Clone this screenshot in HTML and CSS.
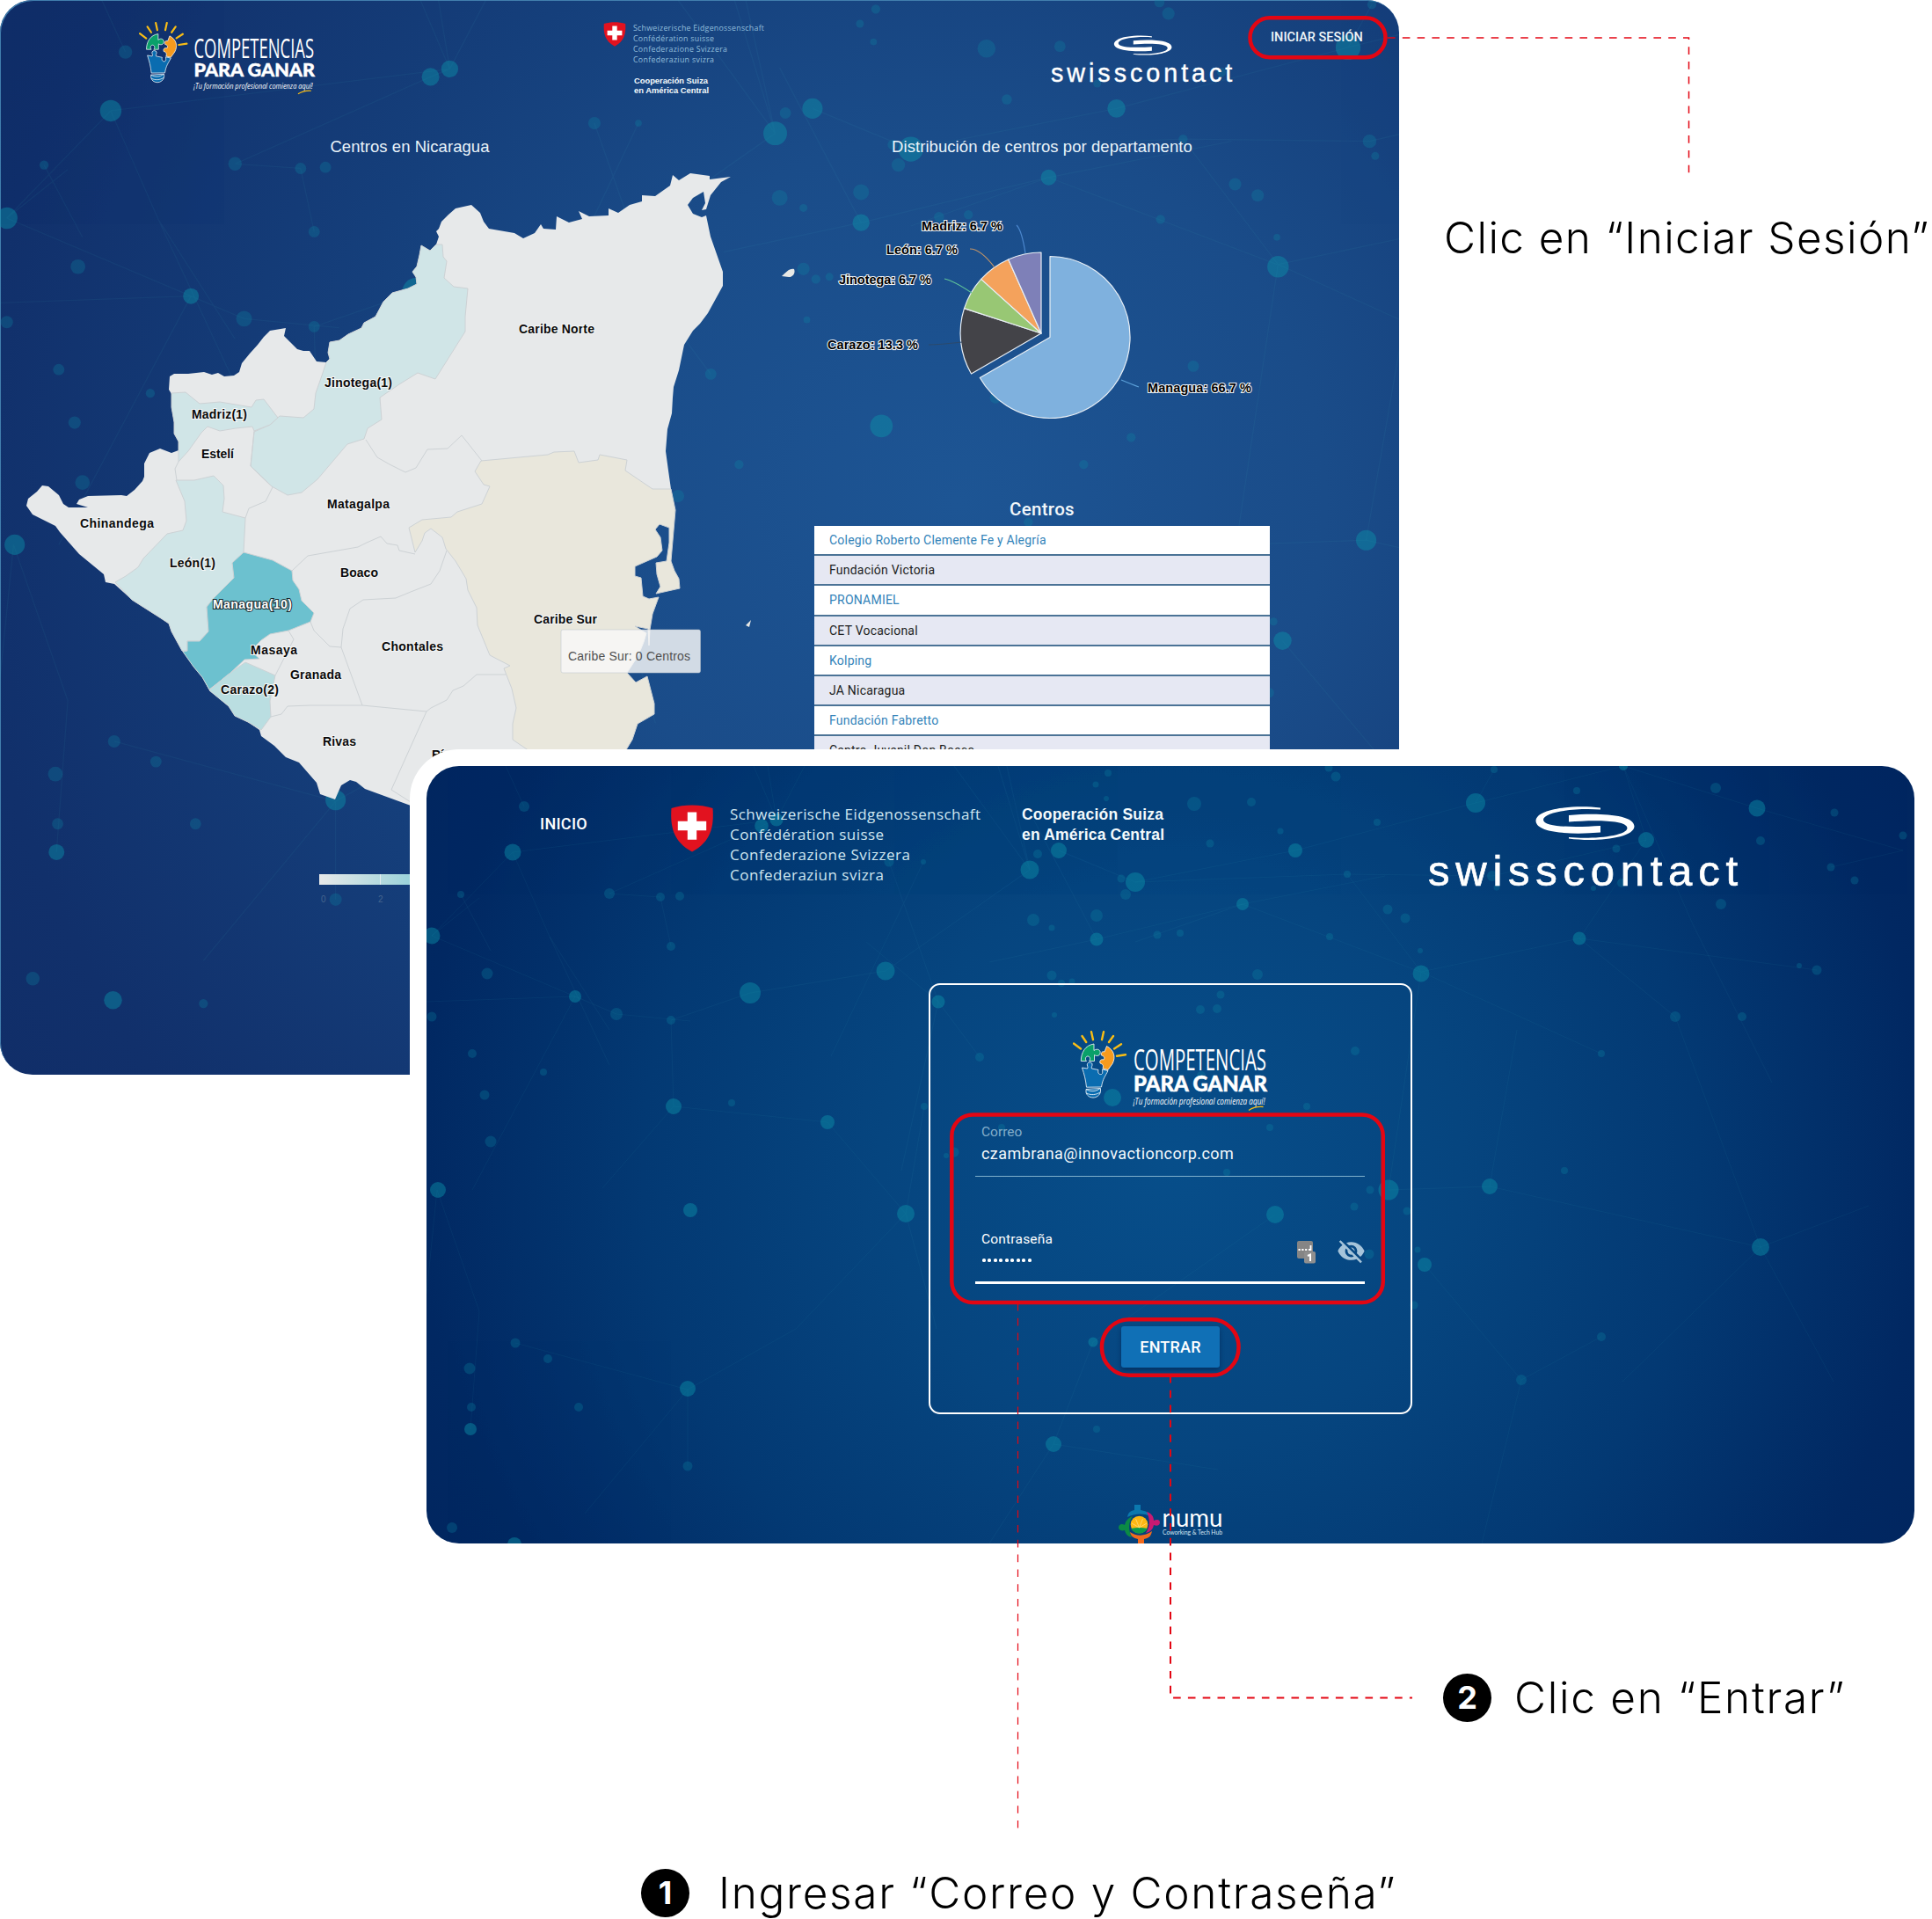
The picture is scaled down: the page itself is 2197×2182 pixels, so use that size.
FILE: index.html
```html
<!DOCTYPE html>
<html lang="es">
<head>
<meta charset="utf-8">
<title>Competencias para Ganar - Inicio de sesión</title>
<link rel="stylesheet" href="styles.css">
</head>
<body>
<svg class="defs" aria-hidden="true">
  <defs>
    <g id="particles">
      <g fill="none" stroke="#3fa8c0" stroke-width="1" opacity=".075">
        <path d="M111 46L90 0M98 98L398 61M98 98L140 194 208 340M98 98L6 193M381 68L398 61 430 0M398 61L372 0M398 61L388 0M381 68L208 145M266 149L208 145M278 205L266 149M39 146L73 210M6 193L169 262 216 282 300 290M169 262L52 482M169 262L0 268M140 194L208 300M6 193L60 150M526 109L582 268M565 109L460 330M368 258L522 233 686 118M368 258L278 289 281 387 200 480M281 387L456 405M456 405L545 509 420 640M545 509L580 640M12 482L0 600M12 482L60 620 50 754M297 709L101 656M297 709L420 640M297 709L297 796M297 709L180 850M582 268L629 331M582 268L500 200M686 118L650 0M686 118L660 0M686 118L600 0"/>
        <path d="M719 96L806 132 988 96 1193 42 1361 0M1193 42L1214 4M1361 0L1513 48 1679 96M1387 84L1361 0M1387 84L1212 125M806 132L1047 123 1212 125M928 157L806 200M928 157L1130 234M762 197L690 60M762 197L928 157 1090 125M762 197L640 223M1131 234L1047 123M1131 234L1311 196 1387 84M1311 196L1420 285 1517 547M1311 196L1581 232M1131 234L1336 327M1094 482L1131 234M1094 482L1209 478 1240 300M1209 478L1517 547M1517 547L1640 500M1517 547L1600 700M1517 547L1360 700M1135 567L1245 698 1336 649M758 655L713 771 640 884M713 771L900 800M965 510L758 655M582 268L540 460M545 509L566 387M1361 0L1440 180 1530 360M1679 96L1597 115M1245 698L1200 884"/>
      </g>
      <g fill="#0c8aa6" opacity=".28">
        <circle cx="111" cy="46" r="6"/><circle cx="39" cy="146" r="4"/><circle cx="208" cy="145" r="6"/><circle cx="266" cy="149" r="5"/><circle cx="288" cy="148" r="5"/><circle cx="278" cy="205" r="5"/><circle cx="526" cy="109" r="5.5"/><circle cx="565" cy="109" r="3"/>
        <circle cx="69" cy="236" r="6.5"/><circle cx="216" cy="282" r="7"/><circle cx="52" cy="327" r="5"/><circle cx="66" cy="374" r="5.5"/><circle cx="73" cy="427" r="6.5"/><circle cx="6" cy="285" r="5.5"/><circle cx="133" cy="348" r="4"/><circle cx="278" cy="289" r="5"/><circle cx="347" cy="383" r="4"/>
        <circle cx="101" cy="656" r="5.5"/><circle cx="138" cy="674" r="5"/><circle cx="49" cy="685" r="6.5"/><circle cx="51" cy="729" r="5"/><circle cx="173" cy="729" r="5"/><circle cx="297" cy="796" r="5.5"/><circle cx="29" cy="866" r="6"/><circle cx="180" cy="888" r="4"/>
        <circle cx="775" cy="8" r="4"/><circle cx="761" cy="21" r="3.5"/><circle cx="773" cy="37" r="3"/><circle cx="873" cy="43" r="8"/><circle cx="938" cy="41" r="5"/><circle cx="1034" cy="12" r="5.5"/><circle cx="1026" cy="2" r="4.5"/><circle cx="1214" cy="4" r="4"/><circle cx="1308" cy="28" r="4"/><circle cx="1466" cy="25" r="6"/><circle cx="1601" cy="53" r="4.5"/>
        <circle cx="1081" cy="64" r="4"/><circle cx="971" cy="74" r="3.5"/><circle cx="891" cy="88" r="4.5"/><circle cx="695" cy="100" r="5"/><circle cx="1353" cy="94" r="4.5"/><circle cx="1517" cy="85" r="5"/><circle cx="1679" cy="79" r="4.5"/><circle cx="1597" cy="115" r="4.5"/><circle cx="1624" cy="130" r="4.5"/><circle cx="1047" cy="123" r="4"/><circle cx="1212" cy="125" r="6"/><circle cx="1217" cy="138" r="3.5"/><circle cx="790" cy="128" r="4.5"/><circle cx="795" cy="146" r="6"/><circle cx="1359" cy="133" r="5"/><circle cx="1327" cy="139" r="3"/><circle cx="1472" cy="157" r="6"/>
        <circle cx="1093" cy="163" r="5.5"/><circle cx="1113" cy="173" r="5.5"/><circle cx="690" cy="175" r="7"/><circle cx="762" cy="170" r="7"/><circle cx="711" cy="184" r="3.5"/><circle cx="831" cy="192" r="4.5"/><circle cx="857" cy="190" r="4"/><circle cx="1027" cy="194" r="4"/><circle cx="1130" cy="210" r="3"/><circle cx="1561" cy="227" r="3"/><circle cx="1581" cy="232" r="5.5"/><circle cx="711" cy="238" r="5.5"/><circle cx="945" cy="237" r="6"/><circle cx="722" cy="247" r="4"/><circle cx="734" cy="245" r="3.5"/>
        <circle cx="714" cy="283" r="3"/><circle cx="880" cy="277" r="5"/><circle cx="899" cy="276" r="5"/><circle cx="903" cy="260" r="4.5"/><circle cx="1056" cy="324" r="5"/><circle cx="629" cy="331" r="5"/><circle cx="881" cy="352" r="5"/><circle cx="566" cy="387" r="4"/><circle cx="1001" cy="387" r="4"/><circle cx="959" cy="411" r="4"/><circle cx="654" cy="411" r="4"/><circle cx="600" cy="439" r="5.5"/><circle cx="591" cy="443" r="3"/><circle cx="910" cy="462" r="4"/><circle cx="1073" cy="482" r="4.5"/><circle cx="1055" cy="501" r="4.5"/><circle cx="1115" cy="506" r="4.5"/><circle cx="1072" cy="555" r="5.5"/><circle cx="1127" cy="550" r="3.5"/><circle cx="1123" cy="613" r="4.5"/>
        <circle cx="1420" cy="285" r="6"/><circle cx="1496" cy="285" r="5"/><circle cx="1336" cy="327" r="4"/><circle cx="1294" cy="460" r="4"/><circle cx="1336" cy="649" r="5"/><circle cx="1245" cy="698" r="6"/><circle cx="762" cy="754" r="4"/>
      </g>
      <g fill="#0c93ab" opacity=".45">
        <circle cx="98" cy="98" r="9.5"/><circle cx="381" cy="68" r="7.8"/><circle cx="398" cy="61" r="7.5"/><circle cx="6" cy="193" r="9.5"/><circle cx="169" cy="262" r="7"/><circle cx="368" cy="258" r="12"/><circle cx="522" cy="233" r="10.5"/><circle cx="281" cy="387" r="9"/><circle cx="300" cy="505" r="8"/><circle cx="13" cy="482" r="9"/><circle cx="456" cy="405" r="8"/><circle cx="545" cy="509" r="10"/><circle cx="297" cy="708" r="9"/><circle cx="50" cy="754" r="7"/><circle cx="713" cy="771" r="9"/><circle cx="100" cy="885" r="8"/>
        <circle cx="1193" cy="42" r="11"/><circle cx="1361" cy="0" r="5"/><circle cx="1513" cy="48" r="9.5"/><circle cx="719" cy="96" r="9"/><circle cx="686" cy="118" r="10.5"/><circle cx="988" cy="96" r="8"/><circle cx="1387" cy="84" r="9"/><circle cx="806" cy="132" r="11"/><circle cx="928" cy="157" r="7"/><circle cx="762" cy="197" r="7.5"/><circle cx="1311" cy="196" r="7.5"/><circle cx="1131" cy="236" r="9.5"/><circle cx="582" cy="268" r="7.5"/><circle cx="780" cy="377" r="10"/><circle cx="1094" cy="482" r="11.5"/><circle cx="965" cy="510" r="10"/><circle cx="1135" cy="567" r="8"/><circle cx="758" cy="655" r="5.5"/><circle cx="1209" cy="478" r="9"/><circle cx="1517" cy="547" r="10"/>
      </g>
    </g>

    <symbol id="brand" viewBox="0 0 222 94">
      <g stroke="#f9bd15" stroke-width="2.4" stroke-linecap="round">
        <path d="M1 14.5l8 6M10.5 6l4.700 7M21 1.200l2 9M35 1.200l-2 9M46 6l-5 7M55 15.200l-8 5.200M60 27.200l-10 1.600"/>
      </g>
      <g stroke="#fff" stroke-width=".8" stroke-linejoin="round">
        <path fill="#0aa06a" d="M9.300 34.500C9.300 25 14 16.500 24 15v7.500c4-3 8-.5 7 3.500-1 3-4.500 3-6.500 1.500v7h-6c2-2 1-5.500-1.500-5.500s-3.500 3.500-1.500 5.500z"/>
        <path fill="#f69a1e" d="M38.500 17.500C47 22 49 30 45 37.500L40 44.500l-6-1.500c1-3 .5-5-3-6-1-3 1-5 4-4 1.500-2 1-4-2.500-5-1-3 1-5 3.500-4z"/>
        <path fill="#0a6cb0" d="M10.500 42l6 1c1.500-2-1-3.500 0-5.500s5-2 5.500.3-1.500 3.500-.5 5.200l7.500 1.500c-1 4 1 5.500 3.500 5 2-1 1-3.500 1-5.500l6.500 1.500c-3 6-6 9-7.500 18.500l-17 .2C14.500 55 13 50 10.500 42z"/>
        <path fill="#0a6cb0" d="M15 66.500l16.500-1v4c-1 4-4.500 6.500-8.500 6.500-4.500 0-7.500-3-8-6z"/>
        <path fill="none" d="M15 66.500c5 3 11 3 16-1M15.500 71c5 2.500 11 2 15.500-1"/>
      </g>
      <text x="69" y="45.300" class="brand-top" textLength="151" lengthAdjust="spacingAndGlyphs">COMPETENCIAS</text>
      <text x="69" y="68.800" class="brand-main" textLength="152" lengthAdjust="spacingAndGlyphs">PARA GANAR</text>
      <text x="68.500" y="84" class="brand-tag" textLength="150" lengthAdjust="spacingAndGlyphs">¡Tu formación profesional comienza aquí!</text>
      <path d="M200 90.500c5-3.500 10-4.500 16.500-4" fill="none" stroke="#f9bd15" stroke-width="1.300"/>
    </symbol>

    <symbol id="shield" viewBox="0 0 50 54">
      <path fill="#e2121f" d="M1.500 4C9 1.500 17 .5 25 .5S41 1.500 48.500 4c1.500 21-2 38-23.500 49.500C3.500 42 0 25 1.500 4z"/>
      <path fill="#fff" d="M19.800 8.500h10.400v10.300h11v10.400h-11v10.500H19.800V29.200h-11V18.800h11z"/>
    </symbol>

    <symbol id="swisscontact" viewBox="0 0 360 100">
      <path fill="#fff" d="M196 3.500C166 0 123 4 122.500 18.500 123 32 162 34.500 196 31.500v-7.500C172 25.500 131 26.500 131 17 131.500 7.500 170 3.500 196 5.500z"/>
      <path fill="#fff" d="M160 38.500c30 4 74 0 74.500-14C234 11 194 9 160 12v7.500c24-2 66-3 66.500 7-.5 9.500-40 13-66.500 10.500z"/>
      <text x="0" y="91.500" class="swc-name" textLength="352">swisscontact</text>
    </symbol>
  </defs>
</svg>

<main class="board">
  <section class="window home">
    <svg class="backdrop" width="1591" height="1222"><use href="#particles" transform="scale(1.285)"/></svg>
    <header class="home-header">
      <svg class="home-brand" width="201" height="85"><use href="#brand"/></svg>
      <svg class="home-swiss" width="190" height="86" viewBox="0 0 190 86">
        <use href="#shield" x="0" y="0" width="26" height="28"/>
        <g class="swiss-names">
          <text x="34" y="9.500" textLength="149">Schweizerische Eidgenossenschaft</text>
          <text x="34" y="21.500" textLength="92">Confédération suisse</text>
          <text x="34" y="33.500" textLength="107">Confederazione Svizzera</text>
          <text x="34" y="45.500" textLength="92">Confederaziun svizra</text>
        </g>
        <g class="swiss-coop small">
          <text x="35" y="70" textLength="84">Cooperación Suiza</text>
          <text x="35" y="81" textLength="85">en América Central</text>
        </g>
      </svg>
      <svg class="home-swc" width="211" height="59"><use href="#swisscontact"/></svg>
      <a class="home-login">INICIAR SESIÓN</a>
    </header>
    <div class="charts">
      <div class="map-col">
        <h2>Centros en Nicaragua</h2>
        <svg width="926" height="1041" viewBox="0 180 926 1041">
          <defs>
            <linearGradient id="scale" x1="0" x2="1"><stop offset="0" stop-color="#e7e9e9"/><stop offset="1" stop-color="#8fd0d8"/></linearGradient>
          </defs>
          <path fill="#e7e9ea" d="M193 428L198 425 214 425 232 423 241 426 248 424 255 428 266 427 272 423 275 413 284 402 293 392 300 383 307 376 325 373 323 382 330 389 338 397 345 399 352 399 360 411 371 412 375 408 373 401 375 389 386 387 396 380 411 373 414 367 427 360 436 343 446 333 464 328 474 323 473 315 469 309 474 303 477 290 479 279 489 285 496 278 499 269 496 263 499 260 502 252 510 244 518 237 536 233 546 242 550 252 556 260 585 265 595 271 608 265 615 255 618 260 632 261 633 246 647 253 662 249 658 240 670 246 692 245 692 237 703 242 716 233 730 229 730 222 745 223 762 211 765 199 772 205 785 197 807 200 807 204 831 201 820 207 808 222 803 238 798 239 802 231 800 218 788 225 782 233 788 243 798 247 803 245 808 269 822 309 822 325 805 356 796 368 788 376 778 392 772 421 766 440 765 452 764 470 759 488 757 513 760 535 763 556 740 566 700 600 690 880 600 930 467 916 415 897 405 889 398 887 388 893 381 909 364 903 360 890 340 867 325 861 312 848 297 837 295 830 282 821 267 814 260 803 238 785 230 770 220 758 213 747 207 740 195 718 192 709 183 703 150 682 130 664 120 662 118 653 90 630 68 605 63 598 37 585 30 575 32 567 42 559 48 552 55 553 67 563 72 573 78 577 100 577 87 573 90 568 100 564 138 563 144 564 153 557 162 547 164 542 164 527 170 515 182 510 195 515 203 512 203 502 198 493 198 480 195 463 195 448 192 443Z"/>
          <g stroke="#cdd2d5" stroke-width="1" stroke-linejoin="round">
            <path fill="#e9e7dc" d="M547 524L623 517 630 514 653 513 658 526 680 523 682 517 713 523 711 535 742 556 763 556 768 580 763 638 767 649 772 658 773 669 746 675 751 667 747 653 746 640 758 638 761 617 761 600 750 596 745 602 751 611 753 626 747 633 722 644 722 655 729 657 731 678 738 681 749 679 742 698 739 716 738 734 737 715 722 712 735 720 732 730 726 745 713 765 723 776 736 769 744 800 744 812 725 823 719 841 710 856 605 856 583 841 583 823 587 805 582 783 573 760 580 757 557 745 543 711 542 691 532 671 530 658 518 638 507 624 503 611 490 601 483 606 480 615 472 628 465 600 480 591 513 588 520 582 548 573 557 553 550 551 540 536Z"/>
            <path fill="#d0e5e7" d="M371 412L366 427 359 447 357 465 345 475 318 473 307 483 289 491 285 530 309 553 327 563 343 560 361 545 395 505 414 499 418 487 434 477 432 452 454 437 475 424 495 431 529 377 529 360 532 328 516 326 505 316 508 297 504 292 503 278 496 278 489 285 479 279 477 290 474 303 469 309 473 315 474 323 464 328 446 333 436 343 427 360 414 367 411 373 396 380 386 387 375 389 373 401 375 408Z"/>
            <path fill="#d0e5e7" d="M195 447L211 446 227 459 250 457 286 463 291 455 300 454 316 475 307 483 289 490 287 485 268 487 250 490 236 485 229 492 214 513 203 525 203 502 198 493 198 480 195 463Z"/>
            <path fill="#d0e5e7" d="M200 546L221 546 243 541 254 552 255 567 253 582 279 589 277 628 265 640 266 657 243 680 235 690 237 718 227 729 213 729 213 740 207 740 195 718 192 709 183 703 150 682 131 662 143 655 157 645 163 635 190 607 208 603 212 592 210 570Z"/>
            <path fill="#6cc1cf" d="M277 628L310 637 332 649 333 660 340 670 343 683 357 697 353 707 328 717 307 721 297 728 285 740 295 749 278 750 260 767 238 784 230 770 220 758 208 741 213 740 213 729 227 729 237 718 235 690 243 680 266 657 264 640Z"/>
            <path fill="#badee1" d="M238 785L258 768 279 753 313 768 307 797 308 815 297 830 282 821 267 814 260 803Z"/>
            <path fill="none" d="M203 525L199 533 201 546M289 490L285 530 310 554 302 570 283 578 279 589M328 717L334 727 313 768M353 707L357 717 375 735 388 736 412 802M308 815L320 812 327 803 353 802 412 802 485 809 490 805 508 796 515 785 527 780 542 767 575 767M485 809L445 898 467 912M388 736L390 715 398 692 413 682 450 680 467 673 490 664 500 649 508 626M332 649L350 632 407 622 417 617 433 610 440 618 452 620 454 626 472 630M416 500L429 520 443 528 461 537 473 532 486 511 509 510 525 495 548 524"/>
          </g>
          <path fill="#e9e9e6" d="M889 314c5-4 8-9 14-8 2 5-2 9-6 9zM848 711l6-6-2 8z"/>
          <g class="map-labels">
            <text x="590" y="379" textLength="86">Caribe Norte</text>
            <text x="369" y="440" textLength="77">Jinotega(1)</text>
            <text x="218" y="476" textLength="63">Madriz(1)</text>
            <text x="229" y="521" textLength="37">Estelí</text>
            <text x="372" y="578" textLength="71">Matagalpa</text>
            <text x="91" y="600" textLength="84">Chinandega</text>
            <text x="193" y="645" textLength="52">León(1)</text>
            <text x="387" y="656" textLength="43">Boaco</text>
            <text x="242" y="692" textLength="90" class="inverse">Managua(10)</text>
            <text x="285" y="744" textLength="53">Masaya</text>
            <text x="434" y="740" textLength="70">Chontales</text>
            <text x="330" y="772" textLength="58">Granada</text>
            <text x="251" y="789" textLength="66">Carazo(2)</text>
            <text x="367" y="848" textLength="38">Rivas</text>
            <text x="607" y="709" textLength="72">Caribe Sur</text>
            <text x="491" y="863" textLength="85">Río San Juan</text>
          </g>
          <g class="map-tip">
            <rect x="638" y="716" width="158.500" height="49" rx="2"/>
            <text x="646" y="751" textLength="139">Caribe Sur: 0 Centros</text>
          </g>
          <rect x="363" y="994" width="120" height="12" fill="url(#scale)"/>
          <path d="M432.500 994v12" stroke="#e4eef0" stroke-width="1"/>
          <g class="scale-labels"><text x="365" y="1026">0</text><text x="430" y="1026">2</text></g>
        </svg>
      </div>
      <div class="data-col">
        <h2>Distribución de centros por departamento</h2>
        <svg width="518" height="382" viewBox="926 180 518 382">
          <g stroke="#e8eef4" stroke-width="1.200" stroke-linejoin="round">
            <path fill="#7fb1de" d="M1194 383.500V291.500A91.500 92 0 1 1 1114.300 429.500Z"/>
            <path fill="#434348" d="M1184 379L1104.500 425A92 92 0 0 1 1096.500 350.600Z"/>
            <path fill="#98c774" d="M1184 379L1096.500 350.600A92 92 0 0 1 1115.700 317.400Z"/>
            <path fill="#f4a25c" d="M1184 379L1115.700 317.400A92 92 0 0 1 1146.700 295Z"/>
            <path fill="#7e80b8" d="M1184 379L1146.700 295A92 92 0 0 1 1184 287Z"/>
          </g>
          <g fill="none" stroke-width="1.200">
            <path stroke="#4a86cc" d="M1156 256q6 6 10 32"/><path stroke="#c29468" d="M1103 283q12 0 28 21"/><path stroke="#5fc39a" d="M1074 317q10 2 31 16"/><path stroke="#2c4a6c" d="M1056 392q12 0 38-3"/><path stroke="#5a9fd8" d="M1275 432q12 5 20 8"/>
          </g>
          <g class="pie-labels">
            <text x="1048" y="262" textLength="92">Madriz: 6.7 %</text>
            <text x="1008" y="289" textLength="81">León: 6.7 %</text>
            <text x="954" y="323" textLength="105">Jinotega: 6.7 %</text>
            <text x="941" y="397" textLength="103">Carazo: 13.3 %</text>
            <text x="1305" y="446" textLength="118">Managua: 66.7 %</text>
          </g>
        </svg>
        <h3>Centros</h3>
        <ul class="centers">
          <li>Colegio Roberto Clemente Fe y Alegría</li>
          <li>Fundación Victoria</li>
          <li>PRONAMIEL</li>
          <li>CET Vocacional</li>
          <li>Kolping</li>
          <li>JA Nicaragua</li>
          <li>Fundación Fabretto</li>
          <li>Centro Juvenil Don Bosco</li>
        </ul>
      </div>
    </div>
  </section>

  <section class="window login">
    <svg class="backdrop" width="1692" height="884"><use href="#particles"/></svg>
    <header class="login-header">
      <a class="login-home">INICIO</a>
      <svg class="login-swiss" width="580" height="100" viewBox="0 0 580 100">
        <use href="#shield" x="0" y="0" width="50" height="54"/>
        <g class="swiss-names large">
          <text x="68" y="16.500" textLength="285">Schweizerische Eidgenossenschaft</text>
          <text x="68" y="39.500" textLength="175">Confédération suisse</text>
          <text x="68" y="62.800" textLength="205">Confederazione Svizzera</text>
          <text x="68" y="86" textLength="175">Confederaziun svizra</text>
        </g>
        <g class="swiss-coop">
          <text x="400" y="17" textLength="161">Cooperación Suiza</text>
          <text x="400" y="39.500" textLength="162">en América Central</text>
        </g>
      </svg>
      <svg class="login-swc" width="360" height="100"><use href="#swisscontact"/></svg>
    </header>
    <form class="card">
      <svg class="card-brand" width="222" height="94"><use href="#brand"/></svg>
      <div class="field">
        <label>Correo</label>
        <span class="value">czambrana@innovactioncorp.com</span>
      </div>
      <div class="field active">
        <div class="field-text">
          <label>Contraseña</label>
          <span class="dots"><i></i><i></i><i></i><i></i><i></i><i></i><i></i><i></i><i></i></span>
        </div>
        <svg class="keyfill" width="22" height="26" viewBox="0 0 22 26">
          <rect x="0" y="0" width="18" height="20" rx="2" fill="#858585"/>
          <path d="M1.500 10h2.200M5.300 10h2.200M9.100 10h2.200M13 10h2M15.500 5v6" stroke="#fff" stroke-width="1.800"/>
          <rect x="8" y="12" width="13" height="13.500" rx="2" fill="#8f8f8f"/>
          <path d="M12 17l3-1.500V23" stroke="#fff" stroke-width="2" fill="none"/>
        </svg>
        <svg class="eye" width="33" height="33" viewBox="0 0 24 24"><path fill="#a6c4da" d="M12 7c2.760 0 5 2.240 5 5 0 .65-.13 1.260-.36 1.830l2.920 2.920c1.510-1.260 2.700-2.890 3.430-4.750-1.730-4.390-6-7.500-11-7.500-1.400 0-2.740.25-3.980.7l2.160 2.160C10.740 7.130 11.350 7 12 7zM2 4.270l2.280 2.280.46.46C3.080 8.300 1.780 10.020 1 12c1.730 4.390 6 7.500 11 7.500 1.550 0 3.030-.3 4.380-.84l.42.42L19.730 22 21 20.730 3.270 3 2 4.270zM7.530 9.800l1.550 1.550c-.05.21-.08.43-.08.65 0 1.660 1.340 3 3 3 .22 0 .44-.03.65-.08l1.550 1.550c-.67.33-1.410.53-2.200.53-2.760 0-5-2.240-5-5 0-.79.2-1.530.53-2.200zm4.310-.78l3.150 3.150.02-.16c0-1.660-1.340-3-3-3l-.17.01z"/></svg>
      </div>
      <button type="button">ENTRAR</button>
    </form>
    <svg class="numu" width="120" height="44" viewBox="0 0 120 44">
      <path fill="#0b78ae" d="M18 0h7v6c6 1 10 3 11 7-8-4-18-3-26 1 1-5 3-7 8-8z"/>
      <path fill="#0b8a45" d="M0 26c0-4 4-5 7-3 1-5 4-8 9-10-5 7-5 16-1 24-5-1-7-4-8-8-3 1-7 0-7-3z"/>
      <path fill="#c81a72" d="M32 8c6 2 8 6 8 10 4-2 7-1 7 2s-3 5-7 3c-1 5-4 8-9 9 5-7 5-16 1-24z"/>
      <path fill="#f06a1d" d="M13 31c7 5 17 5 25-1-1 6-4 8-9 9v5h-7v-5c-5-1-8-3-9-8z"/>
      <circle cx="23.500" cy="22.500" r="9.800" fill="#fcb813"/>
      <path fill="#0b9a4b" d="M14 27c6-1.500 13-1.500 19 0-2 3.500-5 5.500-9.500 5.500S16 30.500 14 27z"/>
      <path d="M23.500 26L15 21M23.500 26l-4-10M23.500 26l4-10M23.500 26L32 21" stroke="#fde08a" stroke-width=".7"/>
      <text x="49.500" y="25" class="numu-name" textLength="69" lengthAdjust="spacingAndGlyphs">numu</text>
      <text x="50" y="33.500" class="numu-sub" textLength="68">Coworking &amp; Tech Hub</text>
    </svg>
  </section>

  <svg class="callouts" width="2197" height="2182">
    <g fill="none" stroke="#e30613">
      <rect x="1421.500" y="20.300" width="154" height="45" rx="22.500" stroke-width="4.500"/>
      <rect x="1082.300" y="1267.500" width="490.500" height="213.500" rx="24" stroke-width="4.500"/>
      <rect x="1253" y="1500.300" width="155.500" height="63.500" rx="31" stroke-width="4.500"/>
      <g stroke-dasharray="8.600 8.200">
        <path d="M1578 43H1920.500V202" stroke-width="1.500"/>
        <path d="M1157.500 1482V2083" stroke-width="1.200"/>
        <path d="M1331 1564V1930.500H1606" stroke-width="2"/>
      </g>
    </g>
  </svg>

  <p class="note note-home">Clic en “Iniciar Sesión”</p>
  <p class="note note-enter"><b>2</b><span>Clic en “Entrar”</span></p>
  <p class="note note-fields"><b>1</b><span>Ingresar “Correo y Contraseña”</span></p>
</main>
</body>
</html>
```
FILE: styles.css
```css
* { box-sizing: border-box; }
body { margin: 0; background: #fff; }
h2, h3, p, ul { margin: 0; padding: 0; }
svg { display: block; flex: none; overflow: visible; }

.defs { position: absolute; width: 0; height: 0; overflow: hidden; }
.board { position: relative; width: 2197px; height: 2182px; overflow: hidden; }

.window { position: absolute; overflow: hidden; border-radius: 37px; }
.backdrop { position: absolute; left: 0; top: 0; }
.window > :not(.backdrop) { position: relative; }

/* Map and statistics window */
.home {
  left: 0; top: 0; width: 1591px; height: 1222px;
  background: radial-gradient(circle at 1087px 570px, #1d5594 0, #1a4c89 420px, #153f7b 720px, #11306b 1120px, #102c66 1400px);
  box-shadow: inset 1px 1px 0 #427fae;
}
.home-header { display: flex; align-items: flex-start; height: 153px; padding: 25px 0 0 158px; }
.home-swiss { margin: 0 0 0 327px; }
.home-swc { margin: 14px 0 0 319px; }
.home-login { margin: 7px 0 0 39px; font: 500 14.500px/22px Roboto, sans-serif; color: #eef4f8; white-space: nowrap; }

.charts { display: grid; grid-template-columns: 926px 518px; }
.charts h2 { height: 27px; font: 400 18.500px/28px "Liberation Sans", sans-serif; letter-spacing: .06px; color: #eaf4fa; text-align: center; white-space: nowrap; }
.map-col h2 { padding-left: 6px; }
.map-labels text { font: 700 14px "Liberation Sans", sans-serif; fill: #0a0a0a; stroke: #f4f6f6; stroke-width: 2px; paint-order: stroke; }
.map-labels .inverse { fill: #fff; stroke: #16282c; }
.map-tip rect { fill: #f8f8f8; fill-opacity: .83; stroke: #b9c2c8; stroke-width: .5; }
.map-tip text { font: 14px "Liberation Sans", sans-serif; fill: #505050; }
.scale-labels text { font: 10px "Liberation Sans", sans-serif; fill: #45658e; }
.pie-labels text { font: 700 14.500px "Liberation Sans", sans-serif; fill: #000; stroke: #f0f3f5; stroke-width: 2.200px; paint-order: stroke; }

.data-col h3 { height: 36px; font: 500 20.500px/34px Roboto, sans-serif; color: #f2f7fa; text-align: center; letter-spacing: .3px; }
.centers { list-style: none; }
.centers li { height: 34.200px; padding-left: 17px; border-bottom: 2px solid #4b7396; background: #fff; font: 14px/32px Roboto, sans-serif; letter-spacing: .22px; color: #3383b9; }
.centers li:nth-child(even) { background: #e6e8f3; color: #1c1e22; }

/* Login window */
.login {
  left: 485px; top: 871px; width: 1692px; height: 884px;
  display: flex; flex-direction: column; align-items: center;
  background: radial-gradient(circle at 846px 450px, #074e8a 0, #06457f 330px, #033973 600px, #012862 860px, #01255e 1000px);
  box-shadow: 0 0 0 19px #fff;
}
.login-header { display: flex; align-items: flex-start; width: 100%; height: 247px; padding: 44px 0 0 129px; }
.login-home { width: 148px; margin-top: 10px; font: 500 18px/24px Roboto, sans-serif; color: #fff; letter-spacing: .3px; }
.login-swc { margin-left: 282px; }

.card { display: flex; flex-direction: column; align-items: center; width: 550px; height: 490px; margin-right: 1px; border: 2px solid #fff; border-radius: 13px; padding: 52px 51px 0; }
.card-brand { margin-left: 1px; }
.field { display: flex; flex-direction: column; width: 443px; height: 66px; margin-top: 6px; padding-left: 7px; border-bottom: 1.500px solid #7fb0cc; font-family: Roboto, sans-serif; }
.field label { display: block; font-size: 15.500px; line-height: 20px; color: #83aecb; padding-top: 5px; }
.field .value { font-size: 18px; line-height: 24px; letter-spacing: .45px; color: #f4f9fc; padding-top: 3px; }
.field.active { flex-direction: row; align-items: flex-start; height: 66px; margin-top: 56px; border-bottom: 3px solid #fff; }
.field-text { flex: 1; }
.active label { color: #fff; padding-top: 5px; letter-spacing: .2px; }
.dots { display: flex; gap: 2.800px; padding: 12px 0 0 1px; }
.dots i { width: 3.700px; height: 3.700px; border-radius: 50%; background: #fff; }
.keyfill { margin: 17px 23px 0 0; }
.eye { margin: 12px -1px 0 0; }
.card button { width: 112px; height: 47px; margin: 48px 0 0 1px; padding: 0; border: 0; border-radius: 3px; background: #1070b6; box-shadow: 0 3px 5px rgba(0, 15, 50, .4); font: 500 18px/47px Roboto, sans-serif; color: #fff; letter-spacing: .2px; }
.numu { margin: 103px 0 0 2px; }

/* Logo lettering */
.brand-top { font: 500 33.500px "Open Sans", sans-serif; fill: #fff; }
.brand-main { font: 900 24px Lato, sans-serif; fill: #fff; stroke: #fff; stroke-width: .5px; }
.brand-tag { font: italic 500 10.500px "Open Sans", sans-serif; fill: #fff; }
.swc-name { font: 49px "Liberation Sans", sans-serif; fill: #fff; stroke: #fff; stroke-width: .7px; }
.swiss-names text { font: 8.800px "Open Sans", sans-serif; fill: #93bfdc; }
.swiss-names.large text { font-size: 17px; fill: #cfe6f0; }
.swiss-coop text { font: 700 17.500px "Liberation Sans", sans-serif; fill: #f4fafc; }
.swiss-coop.small text { font-size: 9.400px; }
.numu-name { font: 28px Lato, sans-serif; fill: #fff; }
.numu-sub { font: 6.800px Lato, sans-serif; fill: #d5e6f2; }

/* Numbered instructions */
.callouts { position: absolute; left: 0; top: 0; }
.note { position: absolute; display: flex; align-items: center; font: 400 49.500px/60px Inter, sans-serif; font-weight: 350; letter-spacing: 1.700px; color: #000; white-space: nowrap; }
.note b { display: flex; align-items: center; justify-content: center; width: 55px; height: 55px; border-radius: 50%; background: #000; color: #fff; font-size: 36px; font-weight: 700; letter-spacing: 0; }
.note-home { left: 1642px; top: 240px; letter-spacing: 1.400px; }
.note-enter { left: 1641px; top: 1900px; gap: 26px; }
.note-fields { left: 729px; top: 2122px; gap: 33px; }
```
